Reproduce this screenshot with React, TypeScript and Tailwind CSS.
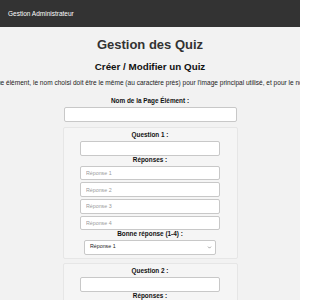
import { ChevronDown } from "lucide-react";

const inputCls = "block bg-white border border-[#c8c8c8] rounded-[2px] px-[5px] text-[5.3px] text-[#222] placeholder:text-[#9a9a9a] outline-none";

function QuestionBlock({ n }: { n: number }) {
  return (
    <div className="w-[175px] shrink-0 flex flex-col items-center bg-[#f5f5f5] border border-[#e6e6e6] rounded-[2px] pt-[3px] pb-[3px] mb-[4.3px]">
      <label className="font-bold leading-[7.5px] text-[6.4px] text-[#111] mb-[2.6px]">Question {n} :</label>
      <input className={`${inputCls} w-[140px] h-[14.8px]`} />
      <label className="font-bold leading-[7.5px] text-[6.4px] text-[#111] mb-[2.4px]">Réponses :</label>
      {[1, 2, 3, 4].map((i) => (
        <input
          key={i}
          placeholder={`Réponse ${i}`}
          className={`${inputCls} w-[140px] h-[14.6px] ${i < 4 ? "mb-[2.1px]" : ""}`}
        />
      ))}
      <label className="font-bold leading-[7.5px] text-[6.4px] text-[#111] mb-[1.9px]">Bonne réponse (1-4) :</label>
      <div className="relative w-[132px] h-[15px] bg-white border border-[#c8c8c8] rounded-[2px] flex items-center px-[5px] text-[5.3px] text-[#222]">
        Réponse 1
        <ChevronDown className="absolute right-[3px] w-[5px] h-[5px] text-[#555]" strokeWidth={2.5} />
      </div>
    </div>
  );
}

export default function App() {
  return (
    <div className="w-[300px] h-[300px] bg-[#f2f2f2] font-['Liberation_Sans',Arial,sans-serif] overflow-hidden">
      <header className="h-[27px] bg-[#333] flex items-center px-[8px]">
        <span className="text-white text-[6.5px]">Gestion Administrateur</span>
      </header>

      <main className="flex flex-col items-center">
        <h1 className="mt-[9.5px] font-bold text-[13px] leading-[15px] text-[#333]">Gestion des Quiz</h1>
        <h2 className="mt-[9px] font-bold text-[9.8px] leading-[11px] text-[#111]">Créer / Modifier un Quiz</h2>
        <div className="mt-[7.7px] w-full flex justify-center overflow-hidden">
          <p className="whitespace-nowrap text-[6.55px] leading-[7.5px] text-[#222] shrink-0">
            Pour chaque élément, le nom choisi doit être le même (au caractère près) pour l'image principal utilisé, et pour le nom du quiz.
          </p>
        </div>

        <label className="mt-[10.7px] font-bold text-[6.4px] leading-[7.5px] text-[#111] mb-[2px]">Nom de la Page Élément :</label>
        <input className={`${inputCls} w-[173px] h-[15px] mb-[5px]`} />

        <QuestionBlock n={1} />
        <QuestionBlock n={2} />
      </main>
    </div>
  );
}
